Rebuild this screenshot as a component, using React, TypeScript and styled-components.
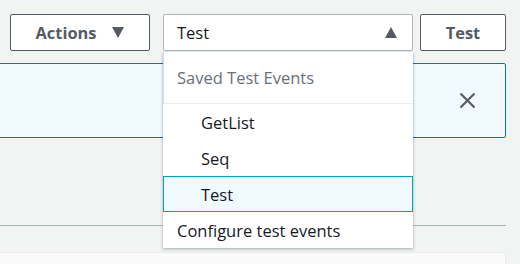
import React from 'react';
import styled, { createGlobalStyle } from 'styled-components';

const GlobalStyle = createGlobalStyle`
  html, body {
    margin: 0;
    padding: 0;
    background: #f2f3f3;
    font-family: "Open Sans", "Noto Sans", sans-serif;
    overflow: hidden;
  }
`;

const Page = styled.div`
  width: 520px;
  height: 264px;
  padding: 14px 14px 0 0;
  box-sizing: border-box;
  overflow: hidden;
`;

const Toolbar = styled.div`
  display: flex;
  align-items: center;
  padding-left: 10px;
  height: 37px;
`;

const Button = styled.button<{ $width: number }>`
  width: ${(p) => p.$width}px;
  height: 37px;
  box-sizing: border-box;
  border: 1px solid #545b64;
  border-radius: 2px;
  background: #fff;
  color: #545b64;
  font-family: inherit;
  font-size: 16.4px;
  font-weight: 700;
  display: flex;
  align-items: center;
  justify-content: center;
  gap: 16px;
  padding: 0;
`;

const SelectWrap = styled.div`
  position: relative;
  margin-left: 13px;
  margin-right: 7px;
`;

const SelectBox = styled.div`
  width: 250px;
  height: 37px;
  box-sizing: border-box;
  border: 1px solid #aab7b8;
  border-radius: 2px;
  background: #fff;
  display: flex;
  align-items: center;
  justify-content: space-between;
  padding: 0 15px 0 13px;
  color: #16191f;
  font-size: 16.5px;
`;

const Menu = styled.div`
  position: absolute;
  top: 38px;
  left: 0;
  width: 250px;
  background: #fff;
  box-shadow: 0 1px 3px rgba(0, 28, 36, 0.35);
  border-left: 1px solid #d5dbdb;
  box-sizing: border-box;
  z-index: 2;
`;

const MenuHeader = styled.div`
  height: 51px;
  display: flex;
  align-items: center;
  padding-left: 13px;
  color: #687078;
  font-size: 16.5px;
  border-bottom: 1px solid #eaeded;
`;

const MenuItem = styled.div<{ $indent?: boolean; $selected?: boolean }>`
  height: 36px;
  box-sizing: border-box;
  display: flex;
  align-items: center;
  padding-left: ${(p) => (p.$indent ? 37 : 13)}px;
  color: #16191f;
  font-size: 16.5px;
  border: 1px solid ${(p) => (p.$selected ? '#00a1c9' : 'transparent')};
  background: ${(p) => (p.$selected ? '#f1faff' : '#fff')};
  margin-left: -1px;
`;

const Alert = styled.div`
  margin: 12px 0 0 -4px;
  height: 75px;
  box-sizing: border-box;
  border: 1px solid #0073bb;
  border-radius: 2px;
  background: #f1faff;
  display: flex;
  align-items: center;
  justify-content: flex-end;
  padding-right: 29px;
`;

const Divider = styled.div`
  margin-top: 87px;
  height: 1px;
  background: #aab7b8;
`;

const Panel = styled.div`
  margin: 26px 0 0 -4px;
  height: 40px;
  background: #fafafa;
  border: 1px solid #eaeded;
  border-radius: 2px;
`;

const Caret = ({ up }: { up?: boolean }) => (
  <svg width="12" height="11" viewBox="0 0 12 11">
    <path d={up ? 'M6 0 L12 11 L0 11 Z' : 'M0 0 L12 0 L6 11 Z'} fill="#545b64" />
  </svg>
);

const CloseIcon = () => (
  <svg width="17" height="17" viewBox="0 0 17 17">
    <path d="M1.5 1.5 L15.5 15.5 M15.5 1.5 L1.5 15.5" stroke="#545b64" strokeWidth="2.2" fill="none" />
  </svg>
);

const App = () => {
  const events = ['GetList', 'Seq', 'Test'];
  return (
    <Page>
      <GlobalStyle />
      <Toolbar>
        <Button $width={140}>
          Actions
          <Caret />
        </Button>
        <SelectWrap>
          <SelectBox>
            <span>Test</span>
            <Caret up />
          </SelectBox>
          <Menu>
            <MenuHeader>Saved Test Events</MenuHeader>
            {events.map((e) => (
              <MenuItem key={e} $indent $selected={e === 'Test'}>
                {e}
              </MenuItem>
            ))}
            <MenuItem>Configure test events</MenuItem>
          </Menu>
        </SelectWrap>
        <Button $width={86}>Test</Button>
      </Toolbar>
      <Alert>
        <CloseIcon />
      </Alert>
      <Divider />
      <Panel />
    </Page>
  );
};

export default App;
